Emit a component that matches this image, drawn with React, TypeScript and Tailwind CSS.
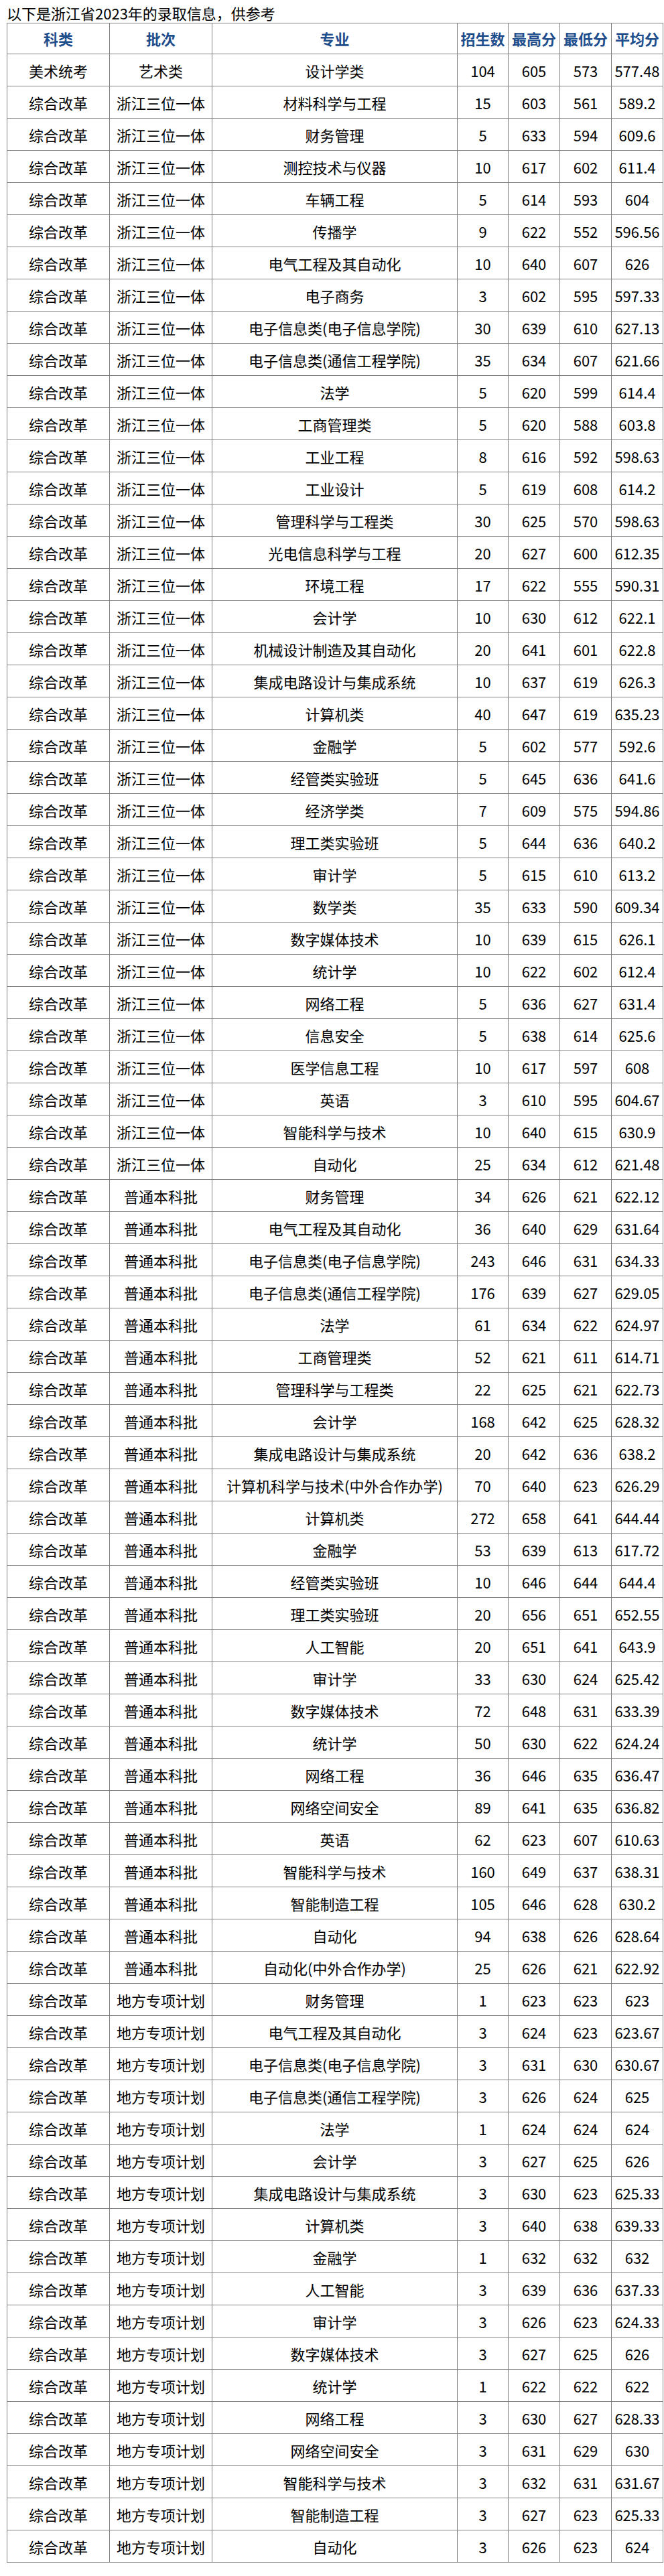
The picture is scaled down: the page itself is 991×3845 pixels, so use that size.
import React from 'react';

interface Row {
  kind: string;
  batch: string;
  major: string;
  count: string;
  max: string;
  min: string;
  avg: string;
}

const SX = '浙江三位一体';
const PT = '普通本科批';
const DF = '地方专项计划';

// [批次, 专业, 招生数, 最高分, 最低分, 平均分]
const raw: [string, string, string, string, string, string][] = [
  [SX, '材料科学与工程', '15', '603', '561', '589.2'],
  [SX, '财务管理', '5', '633', '594', '609.6'],
  [SX, '测控技术与仪器', '10', '617', '602', '611.4'],
  [SX, '车辆工程', '5', '614', '593', '604'],
  [SX, '传播学', '9', '622', '552', '596.56'],
  [SX, '电气工程及其自动化', '10', '640', '607', '626'],
  [SX, '电子商务', '3', '602', '595', '597.33'],
  [SX, '电子信息类(电子信息学院)', '30', '639', '610', '627.13'],
  [SX, '电子信息类(通信工程学院)', '35', '634', '607', '621.66'],
  [SX, '法学', '5', '620', '599', '614.4'],
  [SX, '工商管理类', '5', '620', '588', '603.8'],
  [SX, '工业工程', '8', '616', '592', '598.63'],
  [SX, '工业设计', '5', '619', '608', '614.2'],
  [SX, '管理科学与工程类', '30', '625', '570', '598.63'],
  [SX, '光电信息科学与工程', '20', '627', '600', '612.35'],
  [SX, '环境工程', '17', '622', '555', '590.31'],
  [SX, '会计学', '10', '630', '612', '622.1'],
  [SX, '机械设计制造及其自动化', '20', '641', '601', '622.8'],
  [SX, '集成电路设计与集成系统', '10', '637', '619', '626.3'],
  [SX, '计算机类', '40', '647', '619', '635.23'],
  [SX, '金融学', '5', '602', '577', '592.6'],
  [SX, '经管类实验班', '5', '645', '636', '641.6'],
  [SX, '经济学类', '7', '609', '575', '594.86'],
  [SX, '理工类实验班', '5', '644', '636', '640.2'],
  [SX, '审计学', '5', '615', '610', '613.2'],
  [SX, '数学类', '35', '633', '590', '609.34'],
  [SX, '数字媒体技术', '10', '639', '615', '626.1'],
  [SX, '统计学', '10', '622', '602', '612.4'],
  [SX, '网络工程', '5', '636', '627', '631.4'],
  [SX, '信息安全', '5', '638', '614', '625.6'],
  [SX, '医学信息工程', '10', '617', '597', '608'],
  [SX, '英语', '3', '610', '595', '604.67'],
  [SX, '智能科学与技术', '10', '640', '615', '630.9'],
  [SX, '自动化', '25', '634', '612', '621.48'],
  [PT, '财务管理', '34', '626', '621', '622.12'],
  [PT, '电气工程及其自动化', '36', '640', '629', '631.64'],
  [PT, '电子信息类(电子信息学院)', '243', '646', '631', '634.33'],
  [PT, '电子信息类(通信工程学院)', '176', '639', '627', '629.05'],
  [PT, '法学', '61', '634', '622', '624.97'],
  [PT, '工商管理类', '52', '621', '611', '614.71'],
  [PT, '管理科学与工程类', '22', '625', '621', '622.73'],
  [PT, '会计学', '168', '642', '625', '628.32'],
  [PT, '集成电路设计与集成系统', '20', '642', '636', '638.2'],
  [PT, '计算机科学与技术(中外合作办学)', '70', '640', '623', '626.29'],
  [PT, '计算机类', '272', '658', '641', '644.44'],
  [PT, '金融学', '53', '639', '613', '617.72'],
  [PT, '经管类实验班', '10', '646', '644', '644.4'],
  [PT, '理工类实验班', '20', '656', '651', '652.55'],
  [PT, '人工智能', '20', '651', '641', '643.9'],
  [PT, '审计学', '33', '630', '624', '625.42'],
  [PT, '数字媒体技术', '72', '648', '631', '633.39'],
  [PT, '统计学', '50', '630', '622', '624.24'],
  [PT, '网络工程', '36', '646', '635', '636.47'],
  [PT, '网络空间安全', '89', '641', '635', '636.82'],
  [PT, '英语', '62', '623', '607', '610.63'],
  [PT, '智能科学与技术', '160', '649', '637', '638.31'],
  [PT, '智能制造工程', '105', '646', '628', '630.2'],
  [PT, '自动化', '94', '638', '626', '628.64'],
  [PT, '自动化(中外合作办学)', '25', '626', '621', '622.92'],
  [DF, '财务管理', '1', '623', '623', '623'],
  [DF, '电气工程及其自动化', '3', '624', '623', '623.67'],
  [DF, '电子信息类(电子信息学院)', '3', '631', '630', '630.67'],
  [DF, '电子信息类(通信工程学院)', '3', '626', '624', '625'],
  [DF, '法学', '1', '624', '624', '624'],
  [DF, '会计学', '3', '627', '625', '626'],
  [DF, '集成电路设计与集成系统', '3', '630', '623', '625.33'],
  [DF, '计算机类', '3', '640', '638', '639.33'],
  [DF, '金融学', '1', '632', '632', '632'],
  [DF, '人工智能', '3', '639', '636', '637.33'],
  [DF, '审计学', '3', '626', '623', '624.33'],
  [DF, '数字媒体技术', '3', '627', '625', '626'],
  [DF, '统计学', '1', '622', '622', '622'],
  [DF, '网络工程', '3', '630', '627', '628.33'],
  [DF, '网络空间安全', '3', '631', '629', '630'],
  [DF, '智能科学与技术', '3', '632', '631', '631.67'],
  [DF, '智能制造工程', '3', '627', '623', '625.33'],
  [DF, '自动化', '3', '626', '623', '624'],
];

const rows: Row[] = [
  { kind: '美术统考', batch: '艺术类', major: '设计学类', count: '104', max: '605', min: '573', avg: '577.48' },
  ...raw.map(([batch, major, count, max, min, avg]) => ({ kind: '综合改革', batch, major, count, max, min, avg })),
];

const headers = ['科类', '批次', '专业', '招生数', '最高分', '最低分', '平均分'];

const App: React.FC = () => {
  return (
    <div className="bg-white pl-[10px] pb-[21px] text-[22px] text-black font-['Noto_Sans_CJK_SC','Noto_Sans',sans-serif]">
      <p className="h-[34px] pt-[4px] leading-[30px] whitespace-nowrap">以下是浙江省2023年的录取信息，供参考</p>
      <table className="w-[979px] table-fixed border-collapse">
        <colgroup>
          <col className="w-[153px]" />
          <col className="w-[153px]" />
          <col className="w-[366px]" />
          <col className="w-[76px]" />
          <col className="w-[77px]" />
          <col className="w-[77px]" />
          <col className="w-[77px]" />
        </colgroup>
        <thead>
          <tr className="h-[46px]">
            {headers.map((h) => (
              <th key={h} className="border border-[#808080] p-0 text-center font-bold text-[#1f4e8c] whitespace-nowrap">
                {h}
              </th>
            ))}
          </tr>
        </thead>
        <tbody>
          {rows.map((r, i) => (
            <tr key={i} className="h-[48px]">
              {[r.kind, r.batch, r.major, r.count, r.max, r.min, r.avg].map((v, j) => (
                <td key={j} className="border border-[#808080] p-0 text-center leading-none whitespace-nowrap">
                  {v}
                </td>
              ))}
            </tr>
          ))}
        </tbody>
      </table>
    </div>
  );
};

export default App;
